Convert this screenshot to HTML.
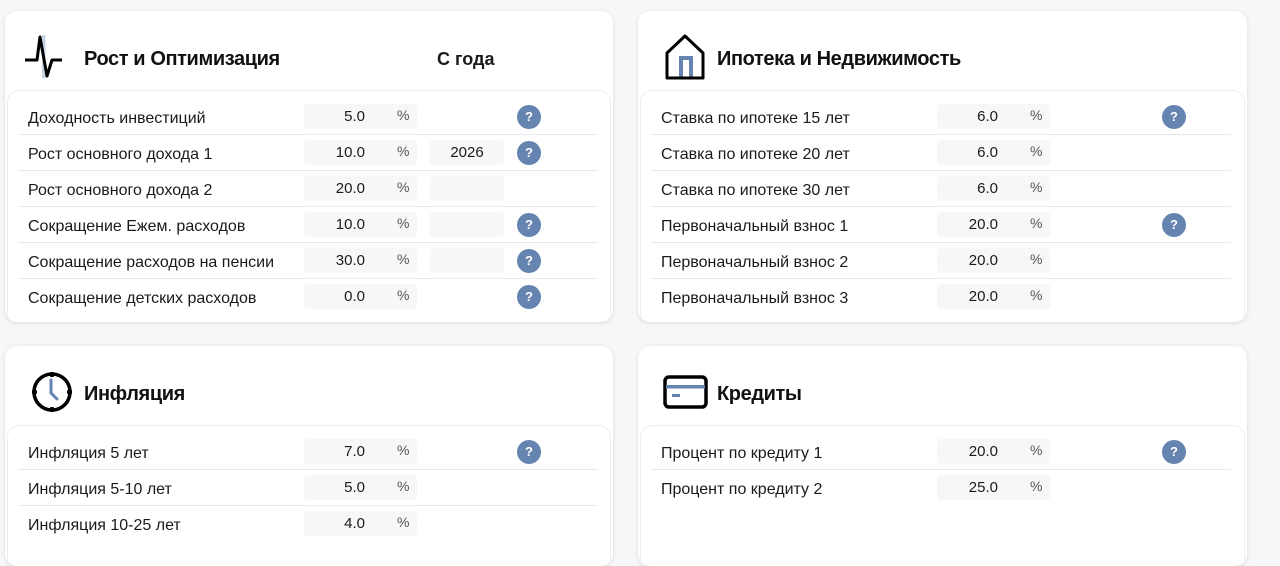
<!DOCTYPE html>
<html><head><meta charset="utf-8"><style>
*{box-sizing:border-box;margin:0;padding:0}
body{width:1280px;height:543px;overflow:hidden;background:#f6f7f9;font-family:"Liberation Sans",Arial,sans-serif;color:#1a1a1a;position:relative}
.card{position:absolute;background:#fff;border-radius:12px;box-shadow:0 1px 4px rgba(0,0,0,.12)}
.inner{position:absolute;left:2px;right:2px;top:79px;bottom:0;border:1px solid #eceef2;border-bottom:none;border-radius:12px 12px 0 0}
.title{position:absolute;left:79px;top:37px;font-size:20px;font-weight:bold;color:#111;letter-spacing:-0.4px}
.icon{position:absolute;left:20px;top:22px}
.row{position:absolute;left:13px;width:580px;height:36px;border-bottom:1px solid #e8e9ec}
.row.last{border-bottom:none}
.lab{position:absolute;left:10px;top:11px;font-size:16px;color:#1a1a1a}
.inp{position:absolute;left:286px;top:5px;width:113px;height:25px;background:#f6f7f9;border-radius:4px}
.inp .v{position:absolute;right:52px;top:4px;font-size:15px}
.inp .p{position:absolute;left:93px;top:3px;font-size:14px;color:#555}
.yr{position:absolute;left:412px;top:5px;width:74px;height:25px;background:#f6f7f9;border-radius:4px;text-align:center;font-size:15px;padding-top:4px}
.q{position:absolute;left:499px;top:6px;width:24px;height:24px;border-radius:50%;background:#6584b0;color:#fff;font-size:13px;font-weight:bold;text-align:center;line-height:24px}
</style></head><body>

<div class="card" style="left:5px;top:11px;width:608px;height:311px">
 <svg class="icon" width="50" height="50" viewBox="0 0 50 50"><rect x="17" y="2" width="3.5" height="43" fill="#c6d3e3"/><polyline points="0,27 12,27 15,4 22,43 27,27 37,27" fill="none" stroke="#000" stroke-width="3" stroke-linejoin="round"/></svg>
 <div class="title">Рост и Оптимизация</div>
 <div style="position:absolute;left:432px;top:38px;font-size:18px;font-weight:bold">С года</div>
 <div class="inner"></div>
 <div class="row" style="top:88px"><div class="lab">Доходность инвестиций</div><div class="inp"><span class="v">5.0</span><span class="p">%</span></div><div class="q">?</div></div>
 <div class="row" style="top:124px"><div class="lab">Рост основного дохода 1</div><div class="inp"><span class="v">10.0</span><span class="p">%</span></div><div class="yr">2026</div><div class="q">?</div></div>
 <div class="row" style="top:160px"><div class="lab">Рост основного дохода 2</div><div class="inp"><span class="v">20.0</span><span class="p">%</span></div><div class="yr"></div></div>
 <div class="row" style="top:196px"><div class="lab">Сокращение Ежем. расходов</div><div class="inp"><span class="v">10.0</span><span class="p">%</span></div><div class="yr"></div><div class="q">?</div></div>
 <div class="row" style="top:232px"><div class="lab">Сокращение расходов на пенсии</div><div class="inp"><span class="v">30.0</span><span class="p">%</span></div><div class="yr"></div><div class="q">?</div></div>
 <div class="row last" style="top:268px"><div class="lab">Сокращение детских расходов</div><div class="inp"><span class="v">0.0</span><span class="p">%</span></div><div class="q">?</div></div>
</div>

<div class="card" style="left:638px;top:11px;width:609px;height:311px">
 <svg class="icon" width="50" height="50" viewBox="0 0 50 50" style="left:27px"><path d="M16 45 V25 H26 V45" fill="none" stroke="#6584b0" stroke-width="4"/><path d="M2 45 V20 L20 3 L38 20 V45 Z" fill="none" stroke="#000" stroke-width="3" stroke-linejoin="round"/></svg>
 <div class="title">Ипотека и Недвижимость</div>
 <div class="inner"></div>
 <div class="row" style="top:88px"><div class="lab">Ставка по ипотеке 15 лет</div><div class="inp"><span class="v">6.0</span><span class="p">%</span></div><div class="q" style="left:511px">?</div></div>
 <div class="row" style="top:124px"><div class="lab">Ставка по ипотеке 20 лет</div><div class="inp"><span class="v">6.0</span><span class="p">%</span></div></div>
 <div class="row" style="top:160px"><div class="lab">Ставка по ипотеке 30 лет</div><div class="inp"><span class="v">6.0</span><span class="p">%</span></div></div>
 <div class="row" style="top:196px"><div class="lab">Первоначальный взнос 1</div><div class="inp"><span class="v">20.0</span><span class="p">%</span></div><div class="q" style="left:511px">?</div></div>
 <div class="row" style="top:232px"><div class="lab">Первоначальный взнос 2</div><div class="inp"><span class="v">20.0</span><span class="p">%</span></div></div>
 <div class="row last" style="top:268px"><div class="lab">Первоначальный взнос 3</div><div class="inp"><span class="v">20.0</span><span class="p">%</span></div></div>
</div>

<div class="card" style="left:5px;top:346px;width:608px;height:220px">
 <svg class="icon" width="50" height="50" viewBox="0 0 50 50" style="left:22px"><circle cx="25" cy="24" r="18" fill="none" stroke="#000" stroke-width="3.5"/><path d="M24 12 V25 L30 31" fill="none" stroke="#6584b0" stroke-width="3" stroke-linecap="round"/><path d="M25 4v5M25 39v5M5 24h5M40 24h5" stroke="#000" stroke-width="3.5"/></svg>
 <div class="title">Инфляция</div>
 <div class="inner"></div>
 <div class="row" style="top:88px"><div class="lab">Инфляция 5 лет</div><div class="inp"><span class="v">7.0</span><span class="p">%</span></div><div class="q">?</div></div>
 <div class="row" style="top:124px"><div class="lab">Инфляция 5-10 лет</div><div class="inp"><span class="v">5.0</span><span class="p">%</span></div></div>
 <div class="row last" style="top:160px"><div class="lab">Инфляция 10-25 лет</div><div class="inp"><span class="v">4.0</span><span class="p">%</span></div></div>
</div>

<div class="card" style="left:638px;top:346px;width:609px;height:220px">
 <svg class="icon" width="50" height="50" viewBox="0 0 50 50" style="left:22px"><rect x="5" y="9" width="41" height="30" rx="4" fill="none" stroke="#000" stroke-width="3.5"/><rect x="6" y="17" width="39" height="3.5" fill="#6584b0"/><rect x="12" y="26" width="8" height="3" fill="#6584b0"/></svg>
 <div class="title">Кредиты</div>
 <div class="inner"></div>
 <div class="row" style="top:88px"><div class="lab">Процент по кредиту 1</div><div class="inp"><span class="v">20.0</span><span class="p">%</span></div><div class="q" style="left:511px">?</div></div>
 <div class="row last" style="top:124px"><div class="lab">Процент по кредиту 2</div><div class="inp"><span class="v">25.0</span><span class="p">%</span></div></div>
</div>

</body></html>
